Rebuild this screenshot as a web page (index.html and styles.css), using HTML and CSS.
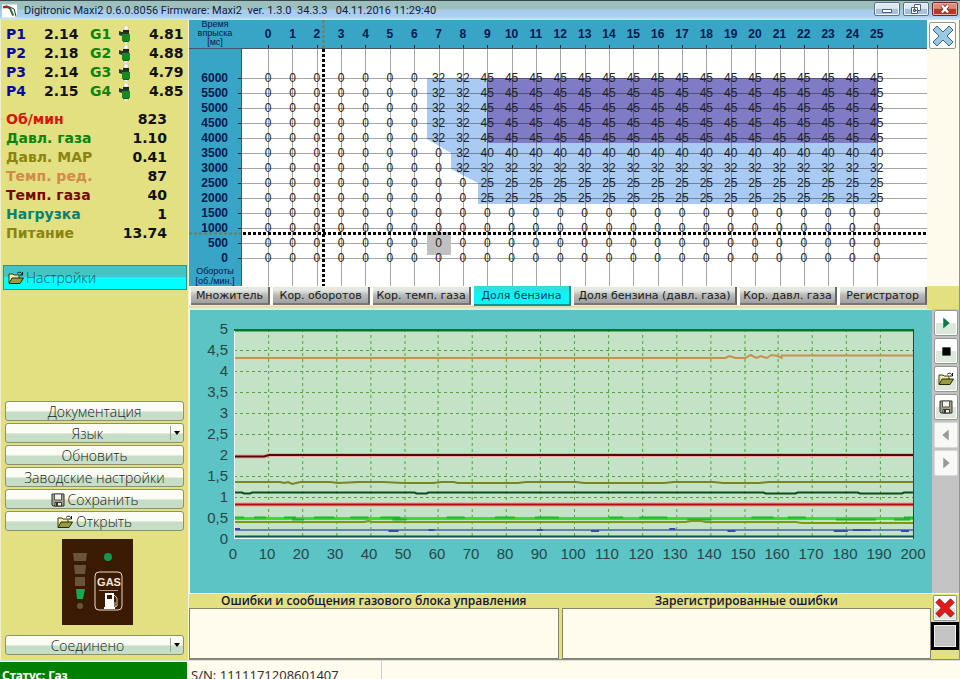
FILE: index.html
```html
<!DOCTYPE html>
<html lang="ru">
<head>
<meta charset="utf-8">
<title>Digitronic Maxi2</title>
<link rel="stylesheet" href="styles.css">
</head>
<body>
<svg class="defs" aria-hidden="true">
  <symbol id="folder" viewBox="0 0 16 14">
    <path d="M1 12V3h4l1 1h5v3" fill="#f4efb0" stroke="#333a10"/>
    <path d="M1 12.500L4 7h11.500l-3.500 5.500z" fill="#9c9a3c" stroke="#222a08"/>
    <path d="M9 2.500c2-2 4-1.500 5 .5M14.500 1v3h-3" fill="none" stroke="#111"/>
  </symbol>
  <symbol id="disk" viewBox="0 0 14 14">
    <path d="M1 1h12v12H2l-1-1z" fill="#a4a48c" stroke="#333"/>
    <path d="M3.500 1h7v6h-7z" fill="#f3f3ea" stroke="#555"/>
    <path d="M4 9.500h6.500V13H4z" fill="#eee" stroke="#333"/>
    <path d="M5 10h2v3H5z" fill="#333"/>
  </symbol>
  <symbol id="injector" viewBox="0 0 14 18">
    <path d="M6 0h4v4H6zM6 16h4v2H6z" fill="#fff" stroke="#aaa" stroke-width=".5"/>
    <path d="M5 4h6v2H5z" fill="#222"/>
    <path d="M1 5l3 1h7v2H4v2L1 9z" fill="#2a3428"/>
    <path d="M4 8h8v7H4z" fill="#148a20"/>
    <path d="M5 15h6v1H5z" fill="#1c5c24"/>
  </symbol>
  <symbol id="cross" viewBox="0 0 24 24">
    <path d="M2 6l4-4 6 6 6-6 4 4-6 6 6 6-4 4-6-6-6 6-4-4 6-6z"/>
  </symbol>
</svg>

<header class="titlebar">
  <svg class="app-icon" viewBox="0 0 16 14" aria-hidden="true">
    <path d="M0 0h16v14H0z" fill="#fff"/>
    <path d="M1 3h7l4 9" fill="none" stroke="#2a6a30" stroke-width="2"/>
    <path d="M1 3l4-1 3 2" fill="none" stroke="#a22" stroke-width="2"/>
    <path d="M9 3l4 2 2 8" fill="none" stroke="#222"/>
  </svg>
  <h1 class="title">Digitronic Maxi2 0.6.0.8056 Firmware: Maxi2&nbsp; ver. 1.3.0&nbsp; 34.3.3&nbsp;&nbsp; 04.11.2016 11:29:40</h1>
  <div class="window-buttons">
    <button class="win" aria-label="Свернуть"><svg viewBox="0 0 24 12"><path d="M7.500 6.500h9v3h-9z" fill="#fff" stroke="#555e70"/></svg></button>
    <button class="win" aria-label="Развернуть"><svg viewBox="0 0 24 12"><path d="M10.500 1.500h6v6h-6zM7.500 4.500h6v6h-6z" fill="#fff" stroke="#555e70"/><path d="M9.500 6.500h2v2h-2z" fill="#9ab" stroke="#555e70"/></svg></button>
    <button class="win win-close" aria-label="Закрыть"><svg viewBox="0 0 24 12"><path d="M9 2.500l6 7M15 2.500l-6 7" stroke="#533" stroke-width="4"/><path d="M9 2.500l6 7M15 2.500l-6 7" stroke="#fff" stroke-width="2.500"/></svg></button>
  </div>
</header>

<main class="main">
  <aside class="sidebar">
    <table class="injectors">
      <tr><th class="petrol">P1</th><td>2.14</td><th class="gas">G1</th><td><svg class="inj"><use href="#injector"/></svg></td><td>4.81</td></tr>
      <tr><th class="petrol">P2</th><td>2.18</td><th class="gas">G2</th><td><svg class="inj"><use href="#injector"/></svg></td><td>4.88</td></tr>
      <tr><th class="petrol">P3</th><td>2.14</td><th class="gas">G3</th><td><svg class="inj"><use href="#injector"/></svg></td><td>4.79</td></tr>
      <tr><th class="petrol">P4</th><td>2.15</td><th class="gas">G4</th><td><svg class="inj"><use href="#injector"/></svg></td><td>4.85</td></tr>
    </table>
    <dl class="readings">
      <div class="rpm"><dt>Об/мин</dt><dd>823</dd></div>
      <div class="gas"><dt>Давл. газа</dt><dd>1.10</dd></div>
      <div class="map-p"><dt>Давл. MAP</dt><dd>0.41</dd></div>
      <div class="t-red"><dt>Темп. ред.</dt><dd>87</dd></div>
      <div class="t-gas"><dt>Темп. газа</dt><dd>40</dd></div>
      <div class="load"><dt>Нагрузка</dt><dd>1</dd></div>
      <div class="map-p"><dt>Питание</dt><dd>13.74</dd></div>
    </dl>
    <button class="settings"><svg class="ico"><use href="#folder"/></svg>Настройки</button>
    <nav class="actions">
      <button class="btn">Документация</button>
      <div class="drop"><select class="btn" aria-label="Язык"><option>Язык</option></select></div>
      <button class="btn">Обновить</button>
      <button class="btn">Заводские настройки</button>
      <button class="btn"><svg class="ico ico-disk"><use href="#disk"/></svg>Сохранить</button>
      <button class="btn"><svg class="ico"><use href="#folder"/></svg>Открыть</button>
    </nav>
    <svg class="gas-switch" viewBox="0 0 71 86" role="img" aria-label="GAS">
      <path d="M0 0h71v86H0z" fill="#3a1a02"/>
      <path d="M11 14h14l-1 8H12zM12 26h12l-1 9H13zM13 38h10v9H13z" fill="#685438"/>
      <path d="M14 50h9l-2 10h-6z" fill="#18a850"/>
      <circle cx="18" cy="67" r="3" fill="#685438"/>
      <circle cx="46" cy="18" r="4" fill="#149850"/>
      <rect x="33" y="33" width="27" height="38" rx="4" fill="none" stroke="#eed8c4"/>
      <text x="47" y="47" text-anchor="middle" class="gas-label">GAS</text>
      <path d="M37 51.500h19" stroke="#b09a80"/>
      <path d="M43 54h9v15h-9zM42 68h11v2H42z" fill="#fff"/>
      <path d="M45 56h5v4h-5z" fill="#3a1a02"/>
      <path d="M52 56l3 3v8l-2 1v-5" fill="none" stroke="#d8c8b4"/>
    </svg>
    <div class="drop connection"><select class="btn" aria-label="Соединение"><option>Соединено</option></select></div>
  </aside>

  <section class="workspace">
    <div class="map-row">
      <div class="map">
        <svg id="map-grid" class="map-grid" viewBox="0 0 738 266" preserveAspectRatio="none" aria-hidden="true"></svg>
        <table id="map-table" class="map-table"></table>
      </div>
      <div class="map-side"><button class="tool tool-big" aria-label="Закрыть карту"><svg class="cross-blue"><use href="#cross"/></svg></button></div>
    </div>
    <div class="tabs-row">
      <nav class="tabs">
        <button class="tab tab-s">Множитель</button>
        <button class="tab">Кор. оборотов</button>
        <button class="tab">Кор. темп. газа</button>
        <button class="tab active">Доля бензина</button>
        <button class="tab tab-l">Доля бензина (давл. газа)</button>
        <button class="tab">Кор. давл. газа</button>
        <button class="tab tab-m">Регистратор</button>
      </nav>
    </div>
    <div class="chart-row">
      <div class="chart">
        <div id="y-axis" class="y-axis"></div>
        <svg id="plot" class="plot" viewBox="0 0 678 210" preserveAspectRatio="none" role="img" aria-label="График"></svg>
        <div id="x-axis" class="x-axis"></div>
      </div>
      <div class="rail">
        <button class="tool" aria-label="Пуск"><svg viewBox="0 0 24 24"><path d="M9 6l7 6-7 6z" fill="#087848"/></svg></button>
        <button class="tool" aria-label="Стоп"><svg viewBox="0 0 24 24"><path d="M8 8h9v9H8z"/></svg></button>
        <button class="tool" aria-label="Открыть"><svg class="ico"><use href="#folder"/></svg></button>
        <button class="tool" aria-label="Сохранить"><svg class="ico ico-disk"><use href="#disk"/></svg></button>
        <button class="tool plain" aria-label="Назад"><svg viewBox="0 0 24 24"><path d="M15 6l-7 6 7 6z" fill="#999"/></svg></button>
        <button class="tool plain" aria-label="Вперёд"><svg viewBox="0 0 24 24"><path d="M9 6l7 6-7 6z" fill="#999"/></svg></button>
      </div>
    </div>
    <div class="messages">
      <div class="msg"><label for="ecu">Ошибки и сообщения газового блока управления</label><textarea id="ecu" readonly></textarea></div>
      <div class="msg"><label for="log">Зарегистрированные ошибки</label><textarea id="log" readonly></textarea></div>
      <div class="msg-side">
        <button class="tool" aria-label="Удалить ошибки"><svg class="cross-red"><use href="#cross"/></svg></button>
        <span class="lamp"></span>
      </div>
    </div>
  </section>
</main>

<footer class="status">
  <span class="state">Статус: Газ</span>
  <span class="serial">S/N: 1111171208601407</span>
</footer>
<script src="script.js"></script>
</body>
</html>
```
FILE: styles.css
```css
* { box-sizing: border-box; }
body {
  margin: 0;
  height: 100vh;
  display: flex;
  flex-direction: column;
  overflow: hidden;
  background: #fffdf0;
  color: #111;
  font-family: "Noto Sans", "Open Sans", sans-serif;
}
button, select, textarea { margin: 0; padding: 0; font: inherit; color: inherit; border-radius: 0; }
.defs { position: absolute; width: 0; height: 0; }

.titlebar {
  flex: none;
  height: 20px;
  display: flex;
  align-items: center;
  gap: 7px;
  padding: 0 2px;
  border-top: 1px solid #36484c;
  background: linear-gradient(#9dbfbd 0, #9dbfbd 40%, #a9cdf0 50%, #a9cdf0 80%, #cfeaf6);
}
.app-icon { width: 15px; height: 14px; }
.title { flex: 1; margin: 0; font: 400 11px/16px Roboto, sans-serif; white-space: nowrap; color: #102038; }
.window-buttons { display: flex; gap: 3px; align-self: flex-start; padding-top: 1px; }
.win {
  width: 26px;
  height: 14px;
  border: 1px solid #5c708c;
  border-radius: 2px;
  background: linear-gradient(#dce8f2 45%, #a4c2e0 50%);
  box-shadow: inset 0 0 0 1px #eef6fc;
}
.win svg { display: block; width: 24px; height: 12px; }
.win-close { border-color: #6c2820; background: linear-gradient(#dd8a7c 45%, #b83828 50%); box-shadow: inset 0 0 0 1px #eab0a4; }

.main { flex: 1; min-height: 0; display: flex; }
.sidebar {
  flex: none;
  width: 189px;
  display: flex;
  flex-direction: column;
  padding: 5px 3px;
  background: #e2e080;
  border-left: 1px solid #f0f0d0;
  border-right: 1px solid #f6f6d4;
}
.injectors { border-collapse: collapse; margin-left: 2px; width: 178px; table-layout: fixed; font: bold 14px/19px "DejaVu Sans", sans-serif; }
.injectors tr { height: 19px; }
.injectors th, .injectors td { padding: 0; text-align: left; }
.injectors th:nth-child(1) { width: 38px; }
.injectors td:nth-child(2) { width: 46px; }
.injectors th:nth-child(3) { width: 28px; }
.injectors td:nth-child(4) { width: 31px; }
.inj { display: block; width: 14px; height: 18px; }
.petrol { color: #0808a0; }
.gas { color: #0a8410; }
.readings { margin: 9px 18px 0 2px; font: bold 14px/19px "DejaVu Sans", sans-serif; }
.readings div { display: flex; justify-content: space-between; }
.readings dd { margin: 0; color: #111; }
.rpm { color: #d81408; }
.map-p { color: #8a8410; }
.t-red { color: #d28a48; }
.t-gas { color: #780808; }
.load { color: #088078; }
.settings {
  display: flex;
  align-items: center;
  gap: 2px;
  height: 25px;
  margin: 22px -2px 0 -1px;
  padding: 0 4px;
  border: 1px solid #3a8c88;
  background: linear-gradient(#44c4c4 50%, #0ff 50%);
  color: #205064;
  font: 300 14px/22px "Open Sans", sans-serif;
}
.ico { flex: none; width: 16px; height: 14px; }
.ico-disk { width: 14px; }
.actions { display: flex; flex-direction: column; gap: 2px; margin-top: auto; }
.btn {
  display: flex;
  align-items: center;
  justify-content: center;
  gap: 3px;
  width: 100%;
  height: 20px;
  padding-top: 2px;
  border: 1px solid #8a9270;
  border-radius: 3px;
  background: linear-gradient(#fbfdf4 50%, #c6ddc8 55%);
  color: #222;
  font: 300 14px/16px "Open Sans", sans-serif;
}
.actions, .connection { margin-left: 1px; margin-right: 1px; }
.drop { position: relative; }
.drop select { display: block; appearance: none; text-align: center; text-align-last: center; padding-right: 14px; }
.drop::before { content: ""; position: absolute; right: 13px; top: 3px; bottom: 3px; border-left: 1px solid #a0a890; }
.drop::after { content: ""; position: absolute; right: 4px; top: 8px; border: 3px solid transparent; border-top: 4px solid #000; border-bottom: 0; pointer-events: none; }
.gas-switch { width: 71px; height: 86px; margin: 8px auto 10px 58px; flex: none; }
.gas-label { font: bold 11px "Liberation Sans", sans-serif; fill: #f4e8dc; }

.workspace { flex: 1; min-width: 0; display: flex; flex-direction: column; background: #e2e080; border-right: 1px solid #8e9684; }
.map-row { flex: none; display: flex; background: #fffbec; }
.map { flex: 1; position: relative; background: #fff; }
.map-grid { position: absolute; inset: 0; width: 100%; height: 100%; }
.map-table {
  position: relative;
  width: 100%;
  table-layout: fixed;
  border-collapse: collapse;
  font: 12px/15px "Liberation Sans", sans-serif;
  color: #222;
}
.map-table th, .map-table td { padding: 0; text-align: center; height: 15px; }
.map-table th { color: #041850; }
.map-table thead th { height: 28px; }
.map-table tbody th { text-align: right; padding-right: 13px; }
.map-table .foot th { text-align: center; padding-right: 0; }
.map-table .pad-top td { height: 23px; }
.col-axis { width: 52px; }
.col-left { width: 15px; }
.col-right { width: 38px; }
.caption { height: 28px; font-size: 9px; font-weight: 400; line-height: 9px; }
.foot .caption { height: 20px; line-height: 10px; }
.map-side { flex: none; width: 32px; padding: 2px; }
.tool {
  display: grid;
  place-items: center;
  width: 24px;
  height: 26px;
  border: 1px solid #909890;
  border-radius: 2px;
  background: #fff;
  box-shadow: inset 0 0 0 1px #fff, inset 0 -12px 0 #dce8dc;
}
.tool svg { width: 22px; height: 22px; }
.tool .ico { width: 16px; height: 14px; }
.tool .ico-disk { width: 14px; }
.tool.plain { background: #f8f8f6; box-shadow: none; border-color: #d8d8d8; }
.tool-big { width: 27px; height: 27px; box-shadow: none; }
.tool .cross-blue { width: 24px; height: 24px; fill: #9cc8e8; stroke: #3c6474; }
.tool .cross-red { fill: #e81818; stroke: #802020; }

.tabs-row { flex: none; height: 23px; padding-right: 32px; }
.tabs { display: flex; gap: 3px; height: 23px; padding: 1px 0 4px 2px; background: linear-gradient(#fffef4 80%, #ddd9a0 90%, #e8f4e0); }
.tab {
  flex: 98 1 0;
  min-width: 0;
  height: 18px;
  padding-top: 2px;
  border: 0;
  border-right: 2px solid #666;
  border-bottom: 2px solid #777;
  background: linear-gradient(#e4e8e2 20%, #b8bab8 50%, #a0a0a0);
  color: #181818;
  font: 11px/14px "DejaVu Sans", sans-serif;
  white-space: nowrap;
}
.tab-s { flex-grow: 79; }
.tab-m { flex-grow: 87; }
.tab-l { flex-grow: 165; }
.tab.active { height: 20px; margin-top: -1px; background: linear-gradient(#30dede 15%, #10f4f8 40%); border-color: #189090; color: #083c50; }

.chart-row { flex: 1; min-height: 0; display: flex; background: #c3c3c3; }
.chart {
  flex: 1;
  min-width: 0;
  display: grid;
  grid-template-columns: 44px 1fr 20px;
  grid-template-rows: 19px 1fr 54px;
  border-left: 1px solid #e8f8f0;
  border-top: 1px solid #d8f0e8;
  background: #5cc4c4;
  color: #28464a;
  font: 15px/20px "Liberation Sans", sans-serif;
}
.y-axis { grid-area: 2 / 1; display: flex; flex-direction: column; justify-content: space-between; margin: -10px 6px -10px 0; text-align: right; }
.plot { grid-area: 2 / 2; width: 100%; height: 100%; min-height: 0; background: #c3e2c6; overflow: hidden; }
.plot path { fill: none; vector-effect: non-scaling-stroke; }
.x-axis { grid-area: 3 / 2; display: flex; justify-content: space-between; margin: 5px -16px 0 -18px; }
.x-axis span { width: 34px; text-align: center; }
.rail { flex: none; width: 27px; display: flex; flex-direction: column; gap: 2px; align-items: center; padding-top: 1px; }

.messages { flex: none; height: 67px; display: flex; gap: 3px; border-top: 1px solid #f8f8dc; border-bottom: 1px solid #888; }
.msg { flex: 1; display: flex; flex-direction: column; }
.msg label { height: 14px; text-align: center; font: 600 12px/14px "Open Sans", sans-serif; color: #14143c; }
.msg textarea { flex: 1; width: 100%; resize: none; border: 1px solid #84846c; background: #fffcee; outline: 0; }
.msg-side { flex: none; width: 28px; margin-left: -3px; display: flex; flex-direction: column; align-items: center; gap: 1px; padding-top: 1px; }
.lamp { width: 28px; height: 28px; border: 3px solid #000; background: #c3c3c3; box-shadow: inset 0 0 0 1px #f0f0f0; }

.status { flex: none; height: 19px; display: flex; overflow: hidden; background: #fffcee; border-top: 1px solid #ddd; line-height: 18px; white-space: nowrap; }
.state { width: 187px; margin-top: 1px; padding: 5px 2px 0; background: #008000; color: #fff; font-size: 12px; font-weight: 700; }
.serial { width: 195px; padding: 5px 4px 0; border-right: 1px solid #ccc; font-size: 13px; color: #333; }
```
FILE: script.js
```js
// Petrol share by injection time (columns) and engine speed (rows).
const speeds = [6000, 5500, 5000, 4500, 4000, 3500, 3000, 2500, 2000, 1500, 1000, 500, 0];
function share(speed, ms) {
  if (speed >= 4000) return ms < 7 ? 0 : ms < 9 ? 32 : 45;
  if (speed === 3500) return ms < 8 ? 0 : ms < 9 ? 32 : 40;
  if (speed === 3000) return ms < 8 ? 0 : 32;
  if (speed >= 2000) return ms < 9 ? 0 : 25;
  return 0;
}
const times = Array.from({ length: 26 }, (_, i) => i);

document.getElementById('map-table').innerHTML =
  '<colgroup><col class="col-axis"><col class="col-left">' + '<col>'.repeat(26) + '<col class="col-right"></colgroup>' +
  '<thead><tr><th><div class="caption">Время<br>впрыска<br>[мс]</div></th><td></td>' +
  times.map(t => `<th>${t}</th>`).join('') + '<td></td></tr></thead><tbody>' +
  '<tr class="pad-top"><td colspan="29"></td></tr>' +
  speeds.map(s => `<tr><th>${s}</th><td></td>${times.map(t => `<td>${share(s, t)}</td>`).join('')}<td></td></tr>`).join('') +
  '<tr class="foot"><th><div class="caption">Обороты<br>[об./мин.]</div></th><td colspan="28"></td></tr></tbody>';

let grid = '', ticks = '';
times.forEach(t => {
  const x = 79 + Math.round(t * 24.36) + 0.5;
  grid += `M${x} 29V266`;
  ticks += `M${x} 25V29`;
});
speeds.forEach((s, i) => {
  const y = 58.5 + i * 15;
  grid += `M52 ${y}H738`;
  ticks += `M49 ${y}H52`;
});
document.getElementById('map-grid').innerHTML = `
  <path d="M0 0H738V28H52V266H0z" fill="#38a4c6"/>
  <path d="M238 58H689V184H289V163L262 149V133L238 119z" fill="#a9cbf3"/>
  <path d="M298 58H689V123H298z" fill="#7f7bc4"/>
  <path d="${grid}" stroke="#000" stroke-opacity=".35"/>
  <path d="${ticks}" stroke="#123"/>
  <path d="M0 28.500H738M52.500 28V266" stroke="#456"/>
  <path d="M238 212h24v23h-24z" fill="#c0c0c0"/>
  <path d="M134.500 0V28M0 213.500H52" stroke="#7a7a50" stroke-width="2" stroke-dasharray="3 2"/>
  <path d="M134.500 29V266M54 213.500H738" stroke="#000" stroke-width="3" stroke-dasharray="3 2"/>`;

document.getElementById('y-axis').innerHTML =
  ['5', '4,5', '4', '3,5', '3', '2,5', '2', '1,5', '1', '0,5', '0'].map(v => `<span>${v}</span>`).join('');
document.getElementById('x-axis').innerHTML =
  Array.from({ length: 21 }, (_, i) => `<span>${i * 10}</span>`).join('');

let lines = '';
for (let i = 1; i < 20; i++) lines += `M${Math.round(i * 33.9) + 0.5} 0V210`;
for (let i = 1; i < 10; i++) lines += `M0 ${i * 21 + 0.5}H678`;
const series = [
  ['M0 29H490l4-2 6 2h10l5-3 6 3 4-2 6 2 5-3 6 1 4 2V26.500H678', '#c89048', 2],
  ['M0 127.500H30L35 126H678', '#eaa8a0', 4],
  ['M0 127.500H30L35 126H678', '#500808', 2],
  ['M0 153H34h12l4 1 4-1 4 2 8-2h30l8 1 20-1h25l20 1h30l8-1h12l4 1h60l8-1h50l8 1h80l9-1h40l10 1h35l10-1H678', '#7c8420', 2],
  ['M0 163.500H8l2 1h6l2-1H180l2 1h10l2-1H528l2 1h30l2-1h60l2 1h42l2-1H678', '#0c4c1c', 2],
  ['M0 175.500H678', '#f0a098', 4],
  ['M0 175.500H678', '#b01010', 2],
  ['M0 189.500H678', '#2ce428', 3],
  ['M0 188.500h10m10 0h12m18 0h12m-4 2h12m10-2h20m16 0h18m12 0h20m-8 2h14m40-2h18m30 0h20m20 0h24m50 0h14m16 0h28m20 2h24m40-2h22m14 0h18m30 2h40m18 0h16m-6-2h14', '#20b428', 2],
  ['M0 193H130l4-1 4 1H450l6-1h10l4 1h90l6 1H678', '#7c9810', 2],
  ['M0 201H678', '#6480b4', 2],
  ['M0 200h6m148 2h10m30-1h6m102 0h6m48 1h8m70-2h6m52 2h8m98 0h14m5-1h18m30 1h8', '#3848b8', 2],
  ['M0 207.500H678', '#085c50', 2],
  ['M0 1H678', '#087828', 3]
];
document.getElementById('plot').innerHTML =
  `<path d="${lines}" stroke="#58a03c" stroke-dasharray="3 3"/>` +
  series.map(([d, color, width]) => `<path d="${d}" stroke="${color}" stroke-width="${width}"/>`).join('') +
  '<path d="M.5 2V209.500H678" stroke="#f0fcf4"/><path d="M677.500 0V210" stroke="#204838"/>';
```
